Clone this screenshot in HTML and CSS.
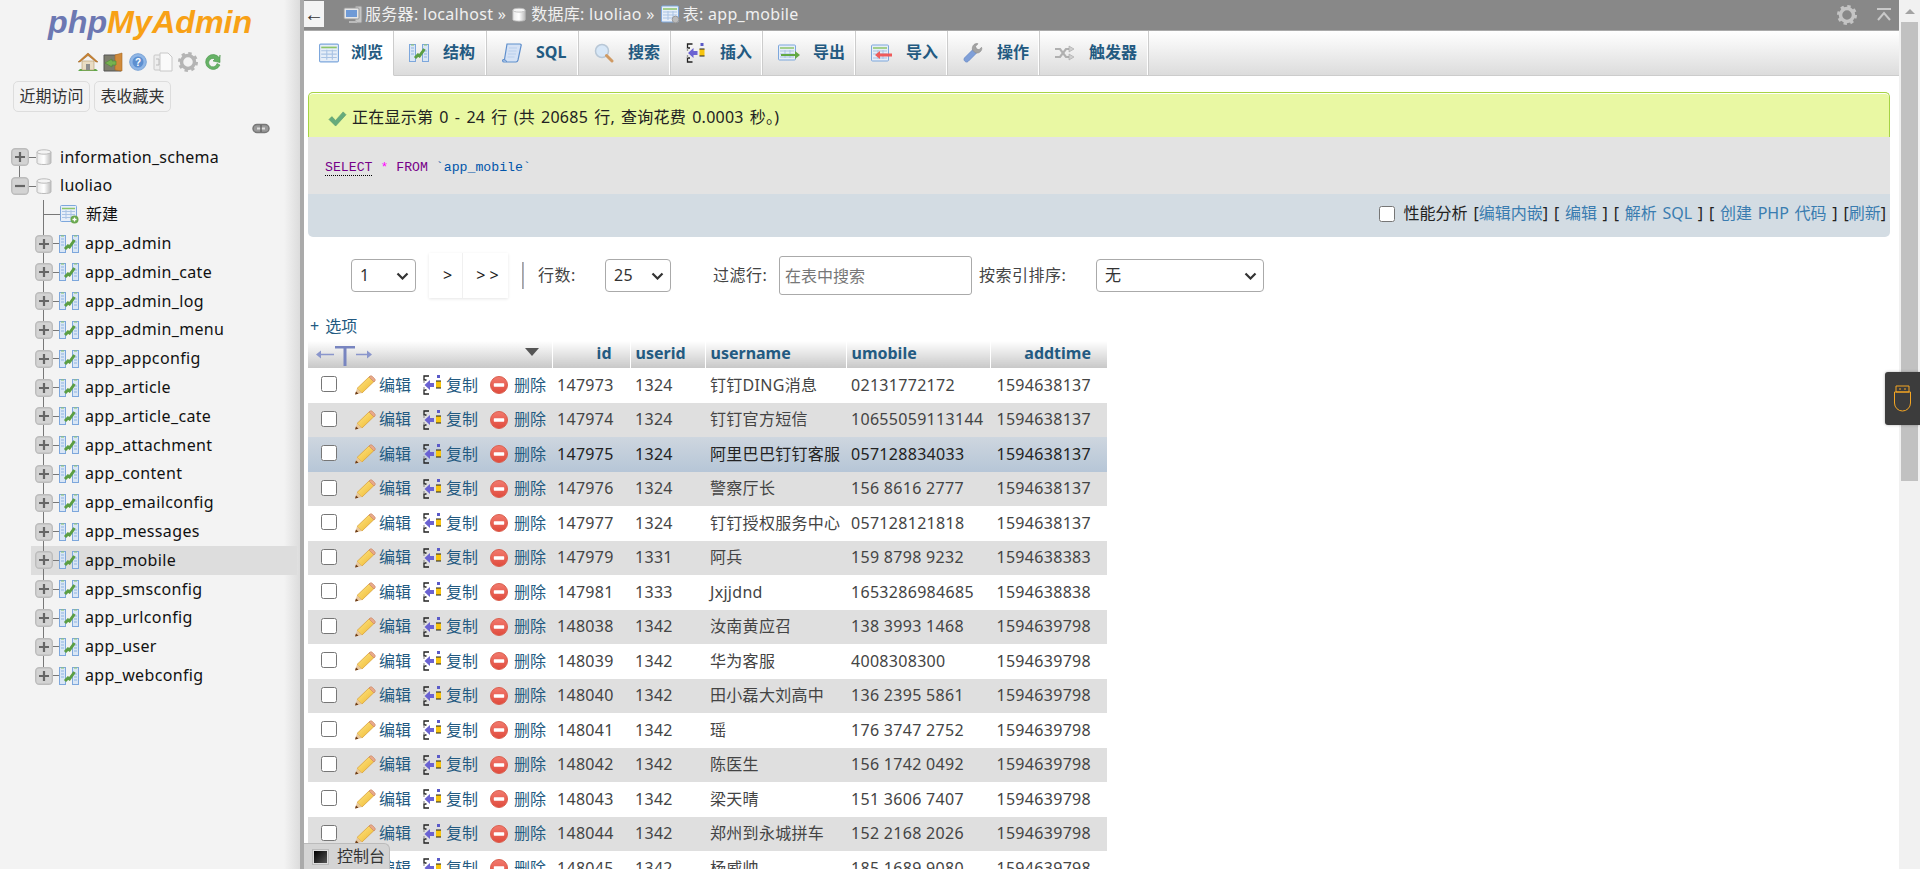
FILE: index.html
```html
<!DOCTYPE html>
<html lang="zh-CN">
<head>
<meta charset="utf-8">
<title>phpMyAdmin</title>
<link rel="stylesheet" href="styles.css">
</head>
<body>
<svg class="defs" aria-hidden="true">
  <defs>
    <linearGradient id="g-db" x1="0" x2="1" y1="0" y2="0"><stop offset="0" stop-color="#e8e8e8"/><stop offset=".5" stop-color="#fff"/><stop offset="1" stop-color="#bbb"/></linearGradient>
    <linearGradient id="g-del" x1="0" x2="0" y1="0" y2="1"><stop offset="0" stop-color="#f27a6e"/><stop offset="1" stop-color="#e04a3c"/></linearGradient>
    <linearGradient id="g-pen" x1="0" x2="1" y1="0" y2="1"><stop offset="0" stop-color="#ffe98a"/><stop offset="1" stop-color="#eeb52c"/></linearGradient>
    <symbol id="i-plus" viewBox="0 0 18 18"><rect x=".7" y=".7" width="16.6" height="16.6" rx="3.5" fill="#d3d3d3" stroke="#bcbcbc" stroke-width="1.4"/><path d="M4 9h10M9 4v10" stroke="#666" stroke-width="2.2"/></symbol>
    <symbol id="i-minus" viewBox="0 0 18 18"><rect x=".7" y=".7" width="16.6" height="16.6" rx="3.5" fill="#d3d3d3" stroke="#bcbcbc" stroke-width="1.4"/><path d="M4 9h10" stroke="#666" stroke-width="2.2"/></symbol>
    <symbol id="i-db" viewBox="0 0 16 17"><path d="M1 3v11c0 2 14 2 14 0V3z" fill="url(#g-db)" stroke="#bbb"/><ellipse cx="8" cy="3" rx="7" ry="2.2" fill="#f4f4f4" stroke="#bbb"/></symbol>
    <symbol id="i-struct" viewBox="0 0 20 18"><g fill="#d9e6f5" stroke="#7da7dc"><rect x=".5" y=".5" width="6" height="17"/><rect x="13.5" y=".5" width="6" height="17"/></g><path d="M2 4h3M2 7h3M2 10h3M15 7h3M15 10h3M15 13h3" stroke="#8fb3e0"/><path d="M2 1h3M15 1h3" stroke="#8cc56a"/><path d="M6 14l3-3 1.500 1 5-7" fill="none" stroke="#5b9e43" stroke-width="3"/></symbol>
    <symbol id="i-table" viewBox="0 0 18 18"><rect x=".5" y="1" width="17" height="16" rx="1" fill="#e6eef8" stroke="#7da7dc"/><path d="M2 4h14" stroke="#8cc56a" stroke-width="1.500"/><path d="M2 7h14M2 10h14M2 13h14M7 6v9M12 6v9" stroke="#a9c3e4"/></symbol>
    <symbol id="i-new" viewBox="0 0 19 19"><rect x=".5" y=".5" width="16" height="16" rx="1" fill="#e6eef8" stroke="#7da7dc"/><path d="M2 3.500h13" stroke="#8cc56a" stroke-width="1.500"/><path d="M2 6.500h13M2 9.500h13M2 12.500h13M6 5v9M11 5v9" stroke="#a9c3e4"/><circle cx="14.500" cy="14.500" r="4" fill="#6aa84f"/><path d="M12.500 14.500h4M14.500 12.500v4" stroke="#fff" stroke-width="1.300"/></symbol>
    <symbol id="i-sql" viewBox="0 0 20 20"><path d="M5 1h13c1 0 1.500 1 1 2l-3 14c-.3 1-1 2-2 2H2c-1.500 0-2-2-.5-2.500h1z" fill="#d5e2f5" stroke="#5f8fcc" stroke-width="1.200"/><path d="M1.500 17c2-.5 3 .5 3 2" fill="#9fbde6" stroke="#5f8fcc"/><path d="M7 5h8M6.500 8h8M6 11h8M5.500 14h7" stroke="#b9cfec"/></symbol>
    <symbol id="i-search" viewBox="0 0 20 20"><circle cx="8" cy="8" r="6.500" fill="#d7e7f7" stroke="#b8c7d6" stroke-width="1.500"/><path d="M12.500 12.500l5.500 5.500" stroke="#d09a63" stroke-width="3" stroke-linecap="round"/></symbol>
    <symbol id="i-insert" viewBox="0 0 19 20"><path d="M6 1H1v4h2.500M6 19H1v-4h2.500" fill="none" stroke="#222" stroke-width="1.300"/><path d="M1 5v3M1 12v3" stroke="#999" stroke-width="1.300"/><path d="M1.500 10L7 5v3h4v4H7v3z" fill="#6a62d2"/><rect x="13" y="6" width="5" height="7" fill="#f6c40f"/><path d="M13 6h5M13 13h5" stroke="#222" stroke-width="1.200"/><rect x="14" y="0" width="3" height="3" fill="#5a5ac8"/></symbol>
    <symbol id="i-export" viewBox="0 0 22 18"><rect x=".5" y="1" width="17" height="15" rx="1" fill="#e6eef8" stroke="#7da7dc"/><path d="M2 4h14" stroke="#8cc56a" stroke-width="1.500"/><path d="M2 7h14M2 10h14M2 13h14M7 6v8M12 6v8" stroke="#a9c3e4"/><path d="M3 10h14V7l5 4-5 4v-3H3z" fill="#62a844"/></symbol>
    <symbol id="i-import" viewBox="0 0 22 18"><rect x=".5" y="1" width="17" height="16" rx="1" fill="#e6eef8" stroke="#7da7dc"/><path d="M2 4h14" stroke="#8cc56a" stroke-width="1.500"/><path d="M2 7h14M2 10h14M2 14h14M7 6v9M12 6v9" stroke="#a9c3e4"/><path d="M21 9.500H9V7l-5 4 5 4v-2.500h12z" fill="#ef5b5b"/></symbol>
    <symbol id="i-ops" viewBox="0 0 20 20"><path d="M1.500 15L10 6.500l3.500 3.500L5 18.500c-2 1.500-5-1-3.500-3.500z" fill="#7f9fd8" stroke="#6d8fca"/><path d="M9.500 7c-.8-3 1-6.500 4.500-6.500l1 .3-2.500 2.500 1 2.500 2.500 1 2.500-2.500.3 1c0 3.500-3.500 5.500-6.500 4.500z" fill="#a3a3a3" stroke="#8a8a8a" stroke-width=".6"/></symbol>
    <symbol id="i-trig" viewBox="0 0 20 14"><path d="M0 3h5l6 8h4M0 11h5l6-8h4" fill="none" stroke="#b0b0b0" stroke-width="2.200"/><path d="M14 0l5 3-5 3zM14 8l5 3-5 3z" fill="#cfcfcf" stroke="#a5a5a5" stroke-width=".6"/></symbol>
    <symbol id="i-pencil" viewBox="0 0 22 20"><path d="M15.500 1.500l5 4.500L8 18l-5-4.500z" fill="url(#g-pen)" stroke="#d9a23a" stroke-width=".8"/><path d="M15.500 1.500c1-1 2-1 3 0l2 2c1 1 1 2 0 3l-.5.500L15 2z" fill="#e8a98a" stroke="#c8825f" stroke-width=".6"/><path d="M3 13.500L1 19.500 8 18z" fill="#e8c79a"/><path d="M2 16.500L1 19.500 4.500 18.800z" fill="#6b3a17"/></symbol>
    <symbol id="i-del" viewBox="0 0 18 18"><circle cx="9" cy="9" r="8.500" fill="url(#g-del)" stroke="#d9604f"/><rect x="3.800" y="7.300" width="10.400" height="3.400" rx=".6" fill="#fff"/></symbol>
    <symbol id="i-home" viewBox="0 0 20 20"><path d="M0 19h20l-2-2H2z" fill="#5fa84a"/><path d="M4 9h12v9H4z" fill="#e9dcc3" stroke="#b59a6d" stroke-width=".6"/><path d="M8 12h4v6H8z" fill="#8d8d8d"/><path d="M0 10L10 1l10 9-2 0-8-6.500L2 10z" fill="#c9822f" stroke="#9b6020" stroke-width=".5"/></symbol>
    <symbol id="i-door" viewBox="0 0 20 20"><path d="M1 3h17v16H1z" fill="#7d7d6d" stroke="#555"/><path d="M12 3l7-2v18l-7-1z" fill="#d08a3a" stroke="#a76822" stroke-width=".6"/><path d="M9 7L2 11l7 4v-2h4V9H9z" fill="#76b150" stroke="#4f8a32" stroke-width=".6"/></symbol>
    <symbol id="i-help" viewBox="0 0 18 18"><circle cx="9" cy="9" r="8.300" fill="#8fb6e6" stroke="#7aa3d6"/><circle cx="9" cy="9" r="5.500" fill="#5d8fd0"/><text x="9" y="13" class="icon-q">?</text></symbol>
    <symbol id="i-doc" viewBox="0 0 20 20"><rect x="1" y="3" width="11" height="15" rx="1" fill="#eee" stroke="#c8c8c8"/><path d="M7 1h8l4 4v14H7z" fill="#fafafa" stroke="#c8c8c8"/><path d="M3 7h3v6H3" fill="none" stroke="#bbb"/></symbol>
    <symbol id="i-gear" viewBox="0 0 20 20"><circle cx="10" cy="10" r="6.500" fill="none" stroke="currentColor" stroke-width="3.500"/><circle cx="10" cy="10" r="8.300" fill="none" stroke="currentColor" stroke-width="3.400" stroke-dasharray="3.200 3.320"/></symbol>
    <symbol id="i-reload" viewBox="0 0 18 20"><path d="M15.500 6A7.500 7.500 0 1 0 16 13l-3-1.500A4.200 4.200 0 1 1 11 7L9 9l7 1.500V3z" fill="#66b266" stroke="#4c974c" stroke-width=".6"/></symbol>
    <symbol id="i-link" viewBox="0 0 18 11"><rect x="1" y="1.500" width="16" height="8" rx="4" fill="#999" stroke="#777" stroke-width="1.500"/><path d="M5 5.500h8" stroke="#ddd" stroke-width="2"/><path d="M9 2v7" stroke="#666" stroke-width="1.500"/></symbol>
    <symbol id="i-server" viewBox="0 0 20 20"><rect x="12" y="1" width="7" height="17" rx="1" fill="#c5c5c5" stroke="#8d8d8d"/><rect x="1" y="3" width="15" height="11" rx="1" fill="#e7e7e7" stroke="#999"/><rect x="3" y="5" width="11" height="7" fill="#6f9ad6"/><path d="M6 18h8v-2H6z" fill="#bbb"/></symbol>
    <symbol id="i-tgear" viewBox="0 0 20 20"><rect x=".5" y="1" width="17" height="16" rx="1" fill="#e6eef8" stroke="#7da7dc"/><path d="M2 4h14" stroke="#8cc56a" stroke-width="1.500"/><path d="M2 7h14M2 10h14M2 13h14M7 6v9M12 6v9" stroke="#a9c3e4"/><circle cx="14.500" cy="14.500" r="3.300" fill="#bbb" stroke="#999"/></symbol>
    <symbol id="i-check" viewBox="0 0 20 18"><path d="M1 10l3-3 4 4 8-9 3 3L8 17z" fill="#65ab7c" stroke="#5b9c6f" stroke-width=".7"/></symbol>
    <symbol id="i-top" viewBox="0 0 16 14"><path d="M1 1h14" stroke="#c9c9c9" stroke-width="2"/><path d="M2 12l6-7 6 7" fill="none" stroke="#c9c9c9" stroke-width="2"/></symbol>
    <symbol id="i-sort" viewBox="0 0 14 8"><path d="M0 0h14L7 8z" fill="#555"/></symbol>
    <symbol id="i-usb" viewBox="0 0 19 28"><path d="M3 1h13v6H3zM1.500 7h16v11a8 8 0 0 1-16 0z" fill="none" stroke="#f5a623" stroke-width="1"/><path d="M6 4h2M11 4h2" stroke="#f5a623"/></symbol>
    <symbol id="i-col" viewBox="0 0 58 22"><path d="M1 10.500l5-4v3.200h13v1.600H6v3.200zM57 10.500l-5-4v3.200H41v1.600h11v3.200z" fill="#8a96cc"/><path d="M20 2h20v2.500h-8.500V22h-3V4.500H20z" fill="#7885c0"/></symbol>
  </defs>
</svg>

<div class="page">
  <aside class="side">
    <div class="logo"><span class="logo-php">php</span><span class="logo-my">MyAdmin</span></div>
    <div class="side-icons">
      <svg class="si si-w20"><use href="#i-home"/></svg>
      <svg class="si si-w20"><use href="#i-door"/></svg>
      <svg class="si si-w18"><use href="#i-help"/></svg>
      <svg class="si si-w20"><use href="#i-doc"/></svg>
      <svg class="si si-w20 si-gear"><use href="#i-gear"/></svg>
      <svg class="si si-w18"><use href="#i-reload"/></svg>
    </div>
    <div class="side-btns"><button class="side-btn">近期访问</button><button class="side-btn">表收藏夹</button></div>
    <div class="side-link"><svg class="link-ic"><use href="#i-link"/></svg></div>
    <ul class="tree">
      <li class="node node-db node-db-first"><svg class="exp"><use href="#i-plus"/></svg><span class="stub"></span><svg class="db"><use href="#i-db"/></svg><span class="name name-db">information_schema</span></li>
      <li class="node node-db"><svg class="exp"><use href="#i-minus"/></svg><span class="stub"></span><svg class="db"><use href="#i-db"/></svg><span class="name name-db">luoliao</span></li>
      <li class="node child new"><span class="stub stub-new"></span><svg class="newic"><use href="#i-new"/></svg><span class="name name-new">新建</span></li>
      <li class="node child"><svg class="exp"><use href="#i-plus"/></svg><span class="stub"></span><svg class="tb"><use href="#i-struct"/></svg><span class="name">app_admin</span></li>
      <li class="node child"><svg class="exp"><use href="#i-plus"/></svg><span class="stub"></span><svg class="tb"><use href="#i-struct"/></svg><span class="name">app_admin_cate</span></li>
      <li class="node child"><svg class="exp"><use href="#i-plus"/></svg><span class="stub"></span><svg class="tb"><use href="#i-struct"/></svg><span class="name">app_admin_log</span></li>
      <li class="node child"><svg class="exp"><use href="#i-plus"/></svg><span class="stub"></span><svg class="tb"><use href="#i-struct"/></svg><span class="name">app_admin_menu</span></li>
      <li class="node child"><svg class="exp"><use href="#i-plus"/></svg><span class="stub"></span><svg class="tb"><use href="#i-struct"/></svg><span class="name">app_appconfig</span></li>
      <li class="node child"><svg class="exp"><use href="#i-plus"/></svg><span class="stub"></span><svg class="tb"><use href="#i-struct"/></svg><span class="name">app_article</span></li>
      <li class="node child"><svg class="exp"><use href="#i-plus"/></svg><span class="stub"></span><svg class="tb"><use href="#i-struct"/></svg><span class="name">app_article_cate</span></li>
      <li class="node child"><svg class="exp"><use href="#i-plus"/></svg><span class="stub"></span><svg class="tb"><use href="#i-struct"/></svg><span class="name">app_attachment</span></li>
      <li class="node child"><svg class="exp"><use href="#i-plus"/></svg><span class="stub"></span><svg class="tb"><use href="#i-struct"/></svg><span class="name">app_content</span></li>
      <li class="node child"><svg class="exp"><use href="#i-plus"/></svg><span class="stub"></span><svg class="tb"><use href="#i-struct"/></svg><span class="name">app_emailconfig</span></li>
      <li class="node child"><svg class="exp"><use href="#i-plus"/></svg><span class="stub"></span><svg class="tb"><use href="#i-struct"/></svg><span class="name">app_messages</span></li>
      <li class="node child hover"><svg class="exp"><use href="#i-plus"/></svg><span class="stub"></span><svg class="tb"><use href="#i-struct"/></svg><span class="name">app_mobile</span></li>
      <li class="node child"><svg class="exp"><use href="#i-plus"/></svg><span class="stub"></span><svg class="tb"><use href="#i-struct"/></svg><span class="name">app_smsconfig</span></li>
      <li class="node child"><svg class="exp"><use href="#i-plus"/></svg><span class="stub"></span><svg class="tb"><use href="#i-struct"/></svg><span class="name">app_urlconfig</span></li>
      <li class="node child"><svg class="exp"><use href="#i-plus"/></svg><span class="stub"></span><svg class="tb"><use href="#i-struct"/></svg><span class="name">app_user</span></li>
      <li class="node child last"><svg class="exp"><use href="#i-plus"/></svg><span class="stub"></span><svg class="tb"><use href="#i-struct"/></svg><span class="name">app_webconfig</span></li>
    </ul>
  </aside>
  <div class="resizer"></div>

  <main class="main">
    <header class="topbar">
      <button class="collapse">←</button>
      <svg class="crumb-ic crumb-first"><use href="#i-server"/></svg><span class="crumb">服务器: localhost »</span>
      <svg class="crumb-ic crumb-db"><use href="#i-db"/></svg><span class="crumb">数据库: luoliao »</span>
      <svg class="crumb-ic"><use href="#i-tgear"/></svg><span class="crumb">表: app_mobile</span>
      <span class="top-fill"></span>
      <svg class="top-gear"><use href="#i-gear"/></svg>
      <svg class="top-up"><use href="#i-top"/></svg>
    </header>
    <nav class="tabs">
      <a class="tab tab-on tw-90"><svg class="tab-ic"><use href="#i-table"/></svg><span>浏览</span></a>
      <a class="tab tw-93"><svg class="tab-ic"><use href="#i-struct"/></svg><span>结构</span></a>
      <a class="tab tw-92"><svg class="tab-ic"><use href="#i-sql"/></svg><span>SQL</span></a>
      <a class="tab tw-92"><svg class="tab-ic"><use href="#i-search"/></svg><span>搜索</span></a>
      <a class="tab tw-92"><svg class="tab-ic"><use href="#i-insert"/></svg><span>插入</span></a>
      <a class="tab tw-93"><svg class="tab-ic tab-ic-w"><use href="#i-export"/></svg><span>导出</span></a>
      <a class="tab tw-92"><svg class="tab-ic tab-ic-w"><use href="#i-import"/></svg><span>导入</span></a>
      <a class="tab tw-92"><svg class="tab-ic"><use href="#i-ops"/></svg><span>操作</span></a>
      <a class="tab tw-109"><svg class="tab-ic"><use href="#i-trig"/></svg><span>触发器</span></a>
    </nav>

    <section class="result">
      <div class="msg"><svg class="msg-ic"><use href="#i-check"/></svg><span>正在显示第 0 - 24 行 (共 20685 行, 查询花费 0.0003 秒。)</span></div>
      <div class="sql"><code><span class="kw kw-u">SELECT</span> <span class="star">*</span> <span class="kw">FROM</span> <span class="id">`app_mobile`</span></code></div>
      <div class="tools">
        <label class="prof"><input type="checkbox" class="cb"> 性能分析</label>
        <span>[<a>编辑内嵌</a>]</span><span>[ <a>编辑</a> ]</span><span>[ <a>解析 SQL</a> ]</span><span>[ <a>创建 PHP 代码</a> ]</span><span>[<a>刷新</a>]</span>
      </div>
    </section>

    <form class="pager">
      <select class="sel sel-page"><option>1</option></select>
      <span class="pg-btns"><button type="button" class="pg pg-1">&gt;</button><button type="button" class="pg pg-2">&gt; &gt;</button></span>
      <span class="pg-div"></span>
      <span class="lab lab-rows">行数:</span>
      <select class="sel sel-rows"><option>25</option></select>
      <span class="lab lab-filter">过滤行:</span>
      <input class="search" placeholder="在表中搜索">
      <span class="lab lab-sort">按索引排序:</span>
      <select class="sel sel-sort"><option>无</option></select>
    </form>

    <div class="opts"><a>+ 选项</a></div>

    <table class="data">
      <colgroup><col class="c-cb"><col class="c-ed"><col class="c-cp"><col class="c-de"><col class="c-id"><col class="c-ui"><col class="c-un"><col class="c-um"><col class="c-at"></colgroup>
      <thead><tr>
        <th colspan="4" class="th-act"><span class="th-act-in"><svg class="col-ic"><use href="#i-col"/></svg><svg class="sort-ic"><use href="#i-sort"/></svg></span></th>
        <th class="th-id">id</th><th>userid</th><th class="th-un">username</th><th class="th-um">umobile</th><th class="th-at">addtime</th>
      </tr></thead>
      <tbody>
        <tr><td class="cbc"><input type="checkbox" class="cb"></td><td><a class="act"><svg class="ic-ed"><use href="#i-pencil"/></svg>编辑</a></td><td><a class="act"><svg class="ic-cp"><use href="#i-insert"/></svg>复制</a></td><td><a class="act"><svg class="ic-de"><use href="#i-del"/></svg>删除</a></td><td>147973</td><td>1324</td><td>钉钉DING消息</td><td>02131772172</td><td class="num">1594638137</td></tr>
        <tr><td class="cbc"><input type="checkbox" class="cb"></td><td><a class="act"><svg class="ic-ed"><use href="#i-pencil"/></svg>编辑</a></td><td><a class="act"><svg class="ic-cp"><use href="#i-insert"/></svg>复制</a></td><td><a class="act"><svg class="ic-de"><use href="#i-del"/></svg>删除</a></td><td>147974</td><td>1324</td><td>钉钉官方短信</td><td>10655059113144</td><td class="num">1594638137</td></tr>
        <tr class="row-hover"><td class="cbc"><input type="checkbox" class="cb"></td><td><a class="act"><svg class="ic-ed"><use href="#i-pencil"/></svg>编辑</a></td><td><a class="act"><svg class="ic-cp"><use href="#i-insert"/></svg>复制</a></td><td><a class="act"><svg class="ic-de"><use href="#i-del"/></svg>删除</a></td><td>147975</td><td>1324</td><td>阿里巴巴钉钉客服</td><td>057128834033</td><td class="num">1594638137</td></tr>
        <tr><td class="cbc"><input type="checkbox" class="cb"></td><td><a class="act"><svg class="ic-ed"><use href="#i-pencil"/></svg>编辑</a></td><td><a class="act"><svg class="ic-cp"><use href="#i-insert"/></svg>复制</a></td><td><a class="act"><svg class="ic-de"><use href="#i-del"/></svg>删除</a></td><td>147976</td><td>1324</td><td>警察厅长</td><td>156 8616 2777</td><td class="num">1594638137</td></tr>
        <tr><td class="cbc"><input type="checkbox" class="cb"></td><td><a class="act"><svg class="ic-ed"><use href="#i-pencil"/></svg>编辑</a></td><td><a class="act"><svg class="ic-cp"><use href="#i-insert"/></svg>复制</a></td><td><a class="act"><svg class="ic-de"><use href="#i-del"/></svg>删除</a></td><td>147977</td><td>1324</td><td>钉钉授权服务中心</td><td>057128121818</td><td class="num">1594638137</td></tr>
        <tr><td class="cbc"><input type="checkbox" class="cb"></td><td><a class="act"><svg class="ic-ed"><use href="#i-pencil"/></svg>编辑</a></td><td><a class="act"><svg class="ic-cp"><use href="#i-insert"/></svg>复制</a></td><td><a class="act"><svg class="ic-de"><use href="#i-del"/></svg>删除</a></td><td>147979</td><td>1331</td><td>阿兵</td><td>159 8798 9232</td><td class="num">1594638383</td></tr>
        <tr><td class="cbc"><input type="checkbox" class="cb"></td><td><a class="act"><svg class="ic-ed"><use href="#i-pencil"/></svg>编辑</a></td><td><a class="act"><svg class="ic-cp"><use href="#i-insert"/></svg>复制</a></td><td><a class="act"><svg class="ic-de"><use href="#i-del"/></svg>删除</a></td><td>147981</td><td>1333</td><td>Jxjjdnd</td><td>1653286984685</td><td class="num">1594638838</td></tr>
        <tr><td class="cbc"><input type="checkbox" class="cb"></td><td><a class="act"><svg class="ic-ed"><use href="#i-pencil"/></svg>编辑</a></td><td><a class="act"><svg class="ic-cp"><use href="#i-insert"/></svg>复制</a></td><td><a class="act"><svg class="ic-de"><use href="#i-del"/></svg>删除</a></td><td>148038</td><td>1342</td><td>汝南黄应召</td><td>138 3993 1468</td><td class="num">1594639798</td></tr>
        <tr><td class="cbc"><input type="checkbox" class="cb"></td><td><a class="act"><svg class="ic-ed"><use href="#i-pencil"/></svg>编辑</a></td><td><a class="act"><svg class="ic-cp"><use href="#i-insert"/></svg>复制</a></td><td><a class="act"><svg class="ic-de"><use href="#i-del"/></svg>删除</a></td><td>148039</td><td>1342</td><td>华为客服</td><td>4008308300</td><td class="num">1594639798</td></tr>
        <tr><td class="cbc"><input type="checkbox" class="cb"></td><td><a class="act"><svg class="ic-ed"><use href="#i-pencil"/></svg>编辑</a></td><td><a class="act"><svg class="ic-cp"><use href="#i-insert"/></svg>复制</a></td><td><a class="act"><svg class="ic-de"><use href="#i-del"/></svg>删除</a></td><td>148040</td><td>1342</td><td>田小磊大刘高中</td><td>136 2395 5861</td><td class="num">1594639798</td></tr>
        <tr><td class="cbc"><input type="checkbox" class="cb"></td><td><a class="act"><svg class="ic-ed"><use href="#i-pencil"/></svg>编辑</a></td><td><a class="act"><svg class="ic-cp"><use href="#i-insert"/></svg>复制</a></td><td><a class="act"><svg class="ic-de"><use href="#i-del"/></svg>删除</a></td><td>148041</td><td>1342</td><td>瑶</td><td>176 3747 2752</td><td class="num">1594639798</td></tr>
        <tr><td class="cbc"><input type="checkbox" class="cb"></td><td><a class="act"><svg class="ic-ed"><use href="#i-pencil"/></svg>编辑</a></td><td><a class="act"><svg class="ic-cp"><use href="#i-insert"/></svg>复制</a></td><td><a class="act"><svg class="ic-de"><use href="#i-del"/></svg>删除</a></td><td>148042</td><td>1342</td><td>陈医生</td><td>156 1742 0492</td><td class="num">1594639798</td></tr>
        <tr><td class="cbc"><input type="checkbox" class="cb"></td><td><a class="act"><svg class="ic-ed"><use href="#i-pencil"/></svg>编辑</a></td><td><a class="act"><svg class="ic-cp"><use href="#i-insert"/></svg>复制</a></td><td><a class="act"><svg class="ic-de"><use href="#i-del"/></svg>删除</a></td><td>148043</td><td>1342</td><td>梁天晴</td><td>151 3606 7407</td><td class="num">1594639798</td></tr>
        <tr><td class="cbc"><input type="checkbox" class="cb"></td><td><a class="act"><svg class="ic-ed"><use href="#i-pencil"/></svg>编辑</a></td><td><a class="act"><svg class="ic-cp"><use href="#i-insert"/></svg>复制</a></td><td><a class="act"><svg class="ic-de"><use href="#i-del"/></svg>删除</a></td><td>148044</td><td>1342</td><td>郑州到永城拼车</td><td>152 2168 2026</td><td class="num">1594639798</td></tr>
        <tr><td class="cbc"><input type="checkbox" class="cb"></td><td><a class="act"><svg class="ic-ed"><use href="#i-pencil"/></svg>编辑</a></td><td><a class="act"><svg class="ic-cp"><use href="#i-insert"/></svg>复制</a></td><td><a class="act"><svg class="ic-de"><use href="#i-del"/></svg>删除</a></td><td>148045</td><td>1342</td><td>杨威帅</td><td>185 1689 9080</td><td class="num">1594639798</td></tr>
      </tbody>
    </table>
  </main>

  <div class="scrollbar"><span class="sb-up"></span><span class="sb-thumb"></span></div>

  <div class="console"><span class="console-ic"></span><span>控制台</span></div>
  <div class="usb"><svg class="usb-ic"><use href="#i-usb"/></svg></div>
</div>
</body>
</html>
```
FILE: styles.css
```css
* { box-sizing: border-box; }
html, body { margin: 0; height: 100%; overflow: hidden; }
body { font: 16px/1.2 "Noto Sans", "Noto Sans CJK SC", sans-serif; color: #444; background: #fff; }
.defs { position: absolute; width: 0; height: 0; }
.icon-q { font: bold 10px "Liberation Sans", sans-serif; fill: #fff; text-anchor: middle; }
svg { display: block; flex: none; }
ul { list-style: none; margin: 0; padding: 0; }

.page { position: relative; display: flex; width: 1920px; height: 869px; overflow: hidden; }

/* sidebar */
.side { width: 300px; flex: none; background: linear-gradient(to right, #f3f3f3 0, #f3f3f3 284px, #dcdcdc 300px); color: #111; padding-top: 3px; }
.logo { font: italic bold 32.250px/38px "Liberation Sans", sans-serif; padding-left: 48px; height: 38px; }
.logo-php { color: #6c78b2; }
.logo-my { color: #f8a116; }
.side-icons { display: flex; gap: 5px; margin: 11px 0 0 78px; height: 20px; }
.si { height: 20px; }
.si-w20 { width: 20px; }
.si-w18 { width: 18px; margin: 0 1px; }
.si-gear { color: #b5b5b5; }
.side-btns { display: flex; gap: 4px; margin: 9px 0 0 13px; }
.side-btn { width: 77px; height: 31px; padding: 0; border: 1px solid #ddd; border-radius: 5px; background: #f3f3f3; font: inherit; color: #333; }
.side-link { display: flex; justify-content: flex-end; padding-right: 30px; margin-top: 11px; height: 11px; }
.link-ic { width: 18px; height: 11px; }
.tree { margin-top: 8.900px; }
.node { position: relative; display: flex; align-items: center; height: 28.800px; padding-left: 35px; }
.node-db { padding-left: 11px; }
.node-db-first::before { content: ""; position: absolute; left: 19px; top: 23px; height: 12px; border-left: 1px solid #777; }
.node.child::before { content: ""; position: absolute; left: 43px; top: 0; bottom: 0; border-left: 1px solid #777; }
.node.last::before { bottom: 50%; }
.node.hover { background: #ddd; margin: 0 3px 0 31px; padding-left: 4px; }
.node.hover::before { left: 12px; }
.node.new { padding-left: 43px; }
.exp { position: relative; width: 18px; height: 18px; }
.stub { width: 7px; height: 1px; background: #777; }
.stub-new { width: 17px; }
.db { width: 16px; height: 17px; }
.tb { width: 20px; height: 18px; margin-left: -1px; }
.newic { width: 19px; height: 19px; }
.name { margin-left: 6px; white-space: nowrap; letter-spacing: .35px; }
.name-db { margin-left: 8px; letter-spacing: .25px; }
.name-new { margin-left: 7px; letter-spacing: 0; }

.resizer { width: 4px; flex: none; background: #aaa; }

/* main */
.main { width: 1595px; flex: none; overflow: hidden; }
.topbar { display: flex; align-items: center; height: 31px; background: #888; border-bottom: 1px solid #aaa; color: #f0f0f0; }
.collapse { width: 20px; height: 26px; margin-bottom: 3px; padding: 0; border: 0; background: #f4f4f4; color: #333; font: 20px/26px "Liberation Sans", sans-serif; }
.crumb-ic { width: 20px; height: 20px; margin-right: 2px; }
.crumb-first { margin-left: 19px; }
.crumb-db { width: 14px; height: 16px; margin-left: 0; margin-right: 5px; }
.crumb { margin-right: 6px; white-space: nowrap; letter-spacing: .3px; }
.top-fill { flex: 1; }
.top-gear { width: 20px; height: 20px; color: #c4c4c4; }
.top-up { width: 16px; height: 14px; margin: 0 7px 0 19px; }

.tabs { display: flex; height: 45px; background: linear-gradient(#fff, #dcdcdc); border-bottom: 1px solid #ccc; }
.tab { display: flex; align-items: center; border-right: 1px solid #ccc; box-shadow: inset -1px 0 0 #fff; font-weight: 700; color: #235a81; padding-left: 15px; }
.tab-on { background: #fff; border-bottom: 1px solid #fff; margin-bottom: -1px; }
.tw-90 { width: 90px; }
.tw-92 { width: 92px; }
.tw-93 { width: 93px; }
.tw-109 { width: 109px; }
.tab-ic { width: 20px; height: 20px; margin-right: 14px; }
.tab-ic-w { width: 22px; height: 18px; margin-right: 13px; }
.tab-on .tab-ic { margin-right: 12px; }

.result { margin: 16px 9px 0 4px; color: #222; }
.msg { display: flex; align-items: center; height: 45px; padding: 6px 0 0 19px; background: #e9f8a3; border: 1px solid #a6d344; border-bottom: 0; border-radius: 5px 5px 0 0; box-shadow: inset 0 1px 0 #fff; letter-spacing: .25px; word-spacing: 1.700px; white-space: nowrap; }
.msg-ic { width: 19px; height: 17px; margin-right: 5px; }
.sql { height: 57px; padding: 19px 0 0 17px; background: #e3e3e3; }
.sql code { font: 13.200px/16px "Liberation Mono", monospace; }
.kw { color: #708; }
.kw-u { border-bottom: 1px dotted #000; }
.star { color: #f0f; }
.id { color: #05a; }
.tools { display: flex; justify-content: flex-end; align-items: center; gap: 6px; height: 43px; padding: 0 4px 4px 0; background: #d3dce3; border-radius: 0 0 5px 5px; color: #222; white-space: nowrap; word-spacing: 1.500px; }
.tools a { color: #3a7cb0; }
.prof { display: flex; align-items: center; gap: 8px; color: #222; }
.cb { width: 16px; height: 16px; margin: 0; accent-color: #fff; }

.pager { display: flex; align-items: center; height: 45px; margin: 16px 0 0 47px; color: #444; }
.sel { height: 33px; padding: 0 0 0 8px; border: 1px solid #aaa; border-radius: 4px; color: #333; font: inherit; letter-spacing: .3px; appearance: none; background: #fff url("data:image/svg+xml,%3Csvg xmlns='http://www.w3.org/2000/svg' width='13' height='8'%3E%3Cpath d='M1.500 1.500l5 5 5-5' fill='none' stroke='%23333' stroke-width='2.200'/%3E%3C/svg%3E") no-repeat right 6px center; }
.sel-page { width: 65px; }
.pg-btns { display: flex; margin-left: 13px; height: 45px; box-shadow: 0 1px 3px rgba(0,0,0,.1); }
.pg { height: 45px; padding: 0 0 0 4px; border: 0; background: #fff; color: #222; font: inherit; }
.pg-1 { width: 34px; border-right: 1px solid #f0f0f0; }
.pg-2 { width: 45px; }
.pg-div { width: 2px; height: 27px; margin-left: 14px; background: linear-gradient(to right, #b89a80, #9dbde8); }
.lab { white-space: nowrap; letter-spacing: .5px; }
.lab-rows { margin-left: 14px; width: 67px; }
.sel-rows { width: 66px; }
.lab-filter { margin-left: 42px; width: 66px; }
.search { width: 193px; height: 39px; padding: 0 5px; border: 1px solid #aaa; border-radius: 3px; font: inherit; }
.search::placeholder { color: #777; }
.lab-sort { margin-left: 7px; width: 117px; }
.sel-sort { width: 168px; height: 33px; }

.opts { margin: 18px 0 0 6px; height: 25px; line-height: 20px; color: #235a81; word-spacing: 2px; }

.data { width: 799px; margin-left: 4px; border-collapse: collapse; table-layout: fixed; }
.c-cb { width: 37px; } .c-ed { width: 74px; } .c-cp { width: 67px; } .c-de { width: 66px; }
.c-id { width: 78px; } .c-ui { width: 75px; } .c-un { width: 141px; } .c-um { width: 144px; } .c-at { width: 117px; }
.data th { height: 27px; padding: 0 0 2px 5px; text-align: left; background: linear-gradient(#fff, #c8c8c8); border-right: 1px solid #fff; color: #235a81; font-weight: 700; }
.data th:last-child { border-right: 0; }
.data .th-act { padding: 0; }
.th-act-in { display: flex; align-items: center; justify-content: space-between; padding: 0 13px 0 7px; }
.col-ic { width: 58px; height: 22px; }
.sort-ic { width: 14px; height: 8px; margin-top: -5px; }
.data .th-id { text-align: right; padding: 0 18px 2px 0; }
.data .th-at { text-align: right; padding: 0 16px 2px 0; }
.data td { height: 34.500px; padding: 0 0 0 5px; white-space: nowrap; overflow: hidden; letter-spacing: .3px; }
.data tbody tr:nth-child(even) { background: #dfdfdf; }
.data .row-hover { background: linear-gradient(#ced6df, #b6c6d7); color: #222; }
.data tbody tr.row-hover td { background: linear-gradient(#ced6df, #b6c6d7); }
.data .cbc { padding: 2px 0 0 13px; }
.data .num { text-align: right; padding: 0 16px 0 0; }
.act { display: flex; align-items: center; color: #235a81; letter-spacing: 0; }
.ic-ed { width: 22px; height: 20px; margin: 0 3px 0 4px; }
.ic-cp { width: 19px; height: 20px; margin: 0 4px 0 -1px; }
.ic-de { width: 18px; height: 18px; margin: 0 6px 0 -1px; }

.scrollbar { position: relative; width: 21px; flex: none; background: #f1f1f1; }
.sb-up { display: block; width: 0; margin: 9px auto 0; border: 5px solid transparent; border-top: 0; border-bottom: 5px solid #a3a3a3; }
.sb-thumb { display: block; width: 17px; height: 459px; margin: 8px 0 0 2px; background: #c1c1c1; }

.console { position: absolute; left: 304px; top: 843px; display: flex; align-items: center; gap: 9px; width: 86px; height: 26px; padding-left: 9px; background: #d4d4d4; border: 1px solid #bbb; border-left: 0; border-bottom: 0; border-radius: 0 6px 0 0; color: #333; }
.console-ic { width: 15px; height: 14px; border: 1px solid #ddd; background: linear-gradient(135deg, #000, #555); box-shadow: 0 0 0 1px #bbb; }
.usb { position: absolute; left: 1885px; top: 372px; display: flex; justify-content: center; align-items: center; width: 35px; height: 53px; background: #3c3c3c; border-radius: 3px 0 0 3px; box-shadow: 0 0 3px rgba(0,0,0,.3); }
.usb-ic { width: 19px; height: 28px; }
```
